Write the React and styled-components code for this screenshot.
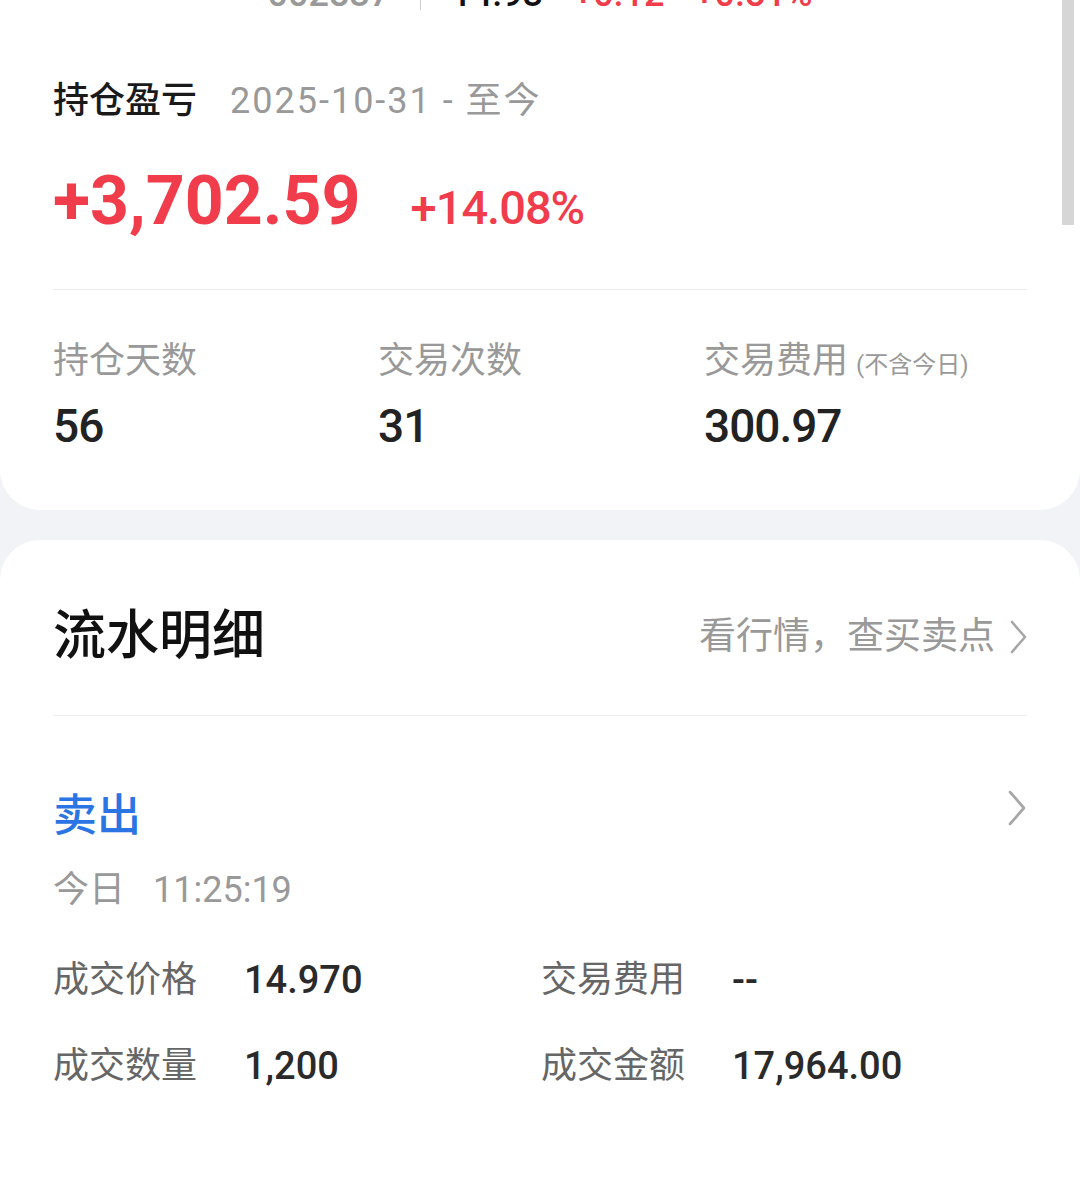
import styled, { createGlobalStyle } from "styled-components";

const GlobalStyle = createGlobalStyle`
  html, body {
    margin: 0;
    padding: 0;
    background: #f2f3f7;
  }
  body {
    font-family: Roboto, "Noto Sans CJK SC", sans-serif;
    -webkit-font-smoothing: antialiased;
  }
`;

const Page = styled.div`
  position: relative;
  width: 1080px;
  min-height: 1181px;
  overflow: hidden;
  background: #f2f3f7;
`;

const ScrollThumb = styled.div`
  position: absolute;
  top: 0;
  right: 6px;
  width: 12px;
  height: 225px;
  background: #d6d6d6;
`;

const SummaryCard = styled.section`
  background: #fff;
  border-radius: 0 0 40px 40px;
  padding: 0 53px 61px;
`;

const DetailCard = styled.section`
  margin-top: 30px;
  background: #fff;
  border-radius: 40px 40px 0 0;
  padding: 0 53px 80px;
  min-height: 600px;
`;

const TickerClip = styled.div`
  height: 10px;
  overflow: hidden;
`;

const TickerRow = styled.div`
  display: flex;
  justify-content: center;
  align-items: center;
  gap: 30px;
  margin-top: -24px;
  padding-left: 0;
  padding-right: 0;
  font-size: 36px;
  line-height: 1;
  font-weight: 500;
`;

const TickerText = styled.span`
  color: ${(p) => p.$color || "#111"};
`;

const TickerSep = styled.span`
  width: 1px;
  height: 36px;
  background: #ccc;
`;

const HeaderRow = styled.div`
  display: flex;
  align-items: center;
  margin-top: 73px;
  height: 36px;
  gap: 33px;
`;

const HeaderTitle = styled.span`
  font-size: 36px;
  line-height: 36px;
  font-weight: 500;
  color: #1a1a1a;
`;

const HeaderDate = styled.span`
  font-size: 36px;
  line-height: 36px;
  letter-spacing: 2px;
  color: #999;
`;

const AmountRow = styled.div`
  display: flex;
  align-items: baseline;
  gap: 50px;
  margin-top: 48px;
  height: 68px;
  color: #f03c4b;
`;

const BigAmount = styled.span`
  font-size: 68px;
  line-height: 68px;
  font-weight: 700;
  letter-spacing: 0;
`;

const Percent = styled.span`
  font-size: 47px;
  line-height: 47px;
  font-weight: 500;
  letter-spacing: -1px;
`;

const Divider = styled.div`
  height: 1px;
  background: #ededed;
  margin-top: ${(p) => p.$top || 0}px;
`;

const StatsGrid = styled.div`
  display: grid;
  grid-template-columns: 325px 326px 1fr;
  margin-top: 53px;
`;

const Stat = styled.div`
  display: flex;
  flex-direction: column;
`;

const StatLabel = styled.div`
  display: flex;
  align-items: baseline;
  gap: 8px;
  height: 36px;
  font-size: 36px;
  line-height: 36px;
  color: #999;
`;

const StatNote = styled.span`
  font-size: 24px;
  line-height: 24px;
  color: #999;
`;

const StatValue = styled.div`
  margin-top: 24px;
  font-size: 46px;
  line-height: 46px;
  font-weight: 500;
  letter-spacing: -1px;
  color: #222;
`;

const SectionHead = styled.div`
  display: flex;
  align-items: center;
  justify-content: space-between;
  padding-top: 70px;
  padding-bottom: 52px;
`;

const SectionTitle = styled.h2`
  margin: 0;
  font-size: 53px;
  line-height: 53px;
  font-weight: 500;
  color: #111;
`;

const MoreLink = styled.a`
  display: flex;
  align-items: center;
  gap: 15px;
  font-size: 37px;
  line-height: 37px;
  color: #999;
  text-decoration: none;
  cursor: pointer;
`;

const Trade = styled.div`
  padding-top: 78px;
`;

const TradeHead = styled.div`
  display: flex;
  align-items: flex-start;
  justify-content: space-between;
  height: 44px;
`;

const TradeType = styled.span`
  font-size: 44px;
  line-height: 44px;
  font-weight: 500;
  color: ${(p) => (p.$sell ? "#2b74e4" : "#f03c4b")};
`;

const TradeArrow = styled.span`
  display: flex;
  margin-top: -4px;
`;

const TradeTime = styled.div`
  display: flex;
  align-items: center;
  gap: 28px;
  margin-top: 34px;
  font-size: 36px;
  line-height: 36px;
  color: #999;
`;

const FieldGrid = styled.div`
  display: grid;
  grid-template-columns: 488px 1fr;
  row-gap: 50px;
  margin-top: 54px;
`;

const Field = styled.div`
  display: flex;
  align-items: center;
  gap: 47px;
  height: 36px;
`;

const FieldLabel = styled.span`
  font-size: 36px;
  line-height: 36px;
  color: #666;
`;

const FieldValue = styled.span`
  font-size: 38px;
  line-height: 38px;
  font-weight: 500;
  letter-spacing: 0;
  color: #2a2a2a;
`;

function Chevron({ w = 17, h = 34 }) {
  return (
    <svg width={w} height={h} viewBox="0 0 17 34" fill="none">
      <polyline points="2,2 15,17 2,32" stroke="#a6a6a6" strokeWidth="2.6" strokeLinecap="round" strokeLinejoin="round" />
    </svg>
  );
}

const stats = [
  { label: "持仓天数", value: "56" },
  { label: "交易次数", value: "31" },
  { label: "交易费用", note: "(不含今日)", value: "300.97" },
];

const fields = [
  { label: "成交价格", value: "14.970" },
  { label: "交易费用", value: "--" },
  { label: "成交数量", value: "1,200" },
  { label: "成交金额", value: "17,964.00" },
];

export default function App() {
  return (
    <Page>
      <GlobalStyle />
      <SummaryCard>
        <TickerClip>
          <TickerRow>
            <TickerText $color="#999">002837</TickerText>
            <TickerSep />
            <TickerText>14.93</TickerText>
            <TickerText $color="#f03c4b">+0.12</TickerText>
            <TickerText $color="#f03c4b">+0.81%</TickerText>
          </TickerRow>
        </TickerClip>

        <HeaderRow>
          <HeaderTitle>持仓盈亏</HeaderTitle>
          <HeaderDate>2025-10-31 - 至今</HeaderDate>
        </HeaderRow>

        <AmountRow>
          <BigAmount>+3,702.59</BigAmount>
          <Percent>+14.08%</Percent>
        </AmountRow>

        <Divider $top={54} />

        <StatsGrid>
          {stats.map((s) => (
            <Stat key={s.label}>
              <StatLabel>
                {s.label}
                {s.note && <StatNote>{s.note}</StatNote>}
              </StatLabel>
              <StatValue>{s.value}</StatValue>
            </Stat>
          ))}
        </StatsGrid>
      </SummaryCard>

      <DetailCard>
        <SectionHead>
          <SectionTitle>流水明细</SectionTitle>
          <MoreLink>
            看行情，查买卖点
            <Chevron />
          </MoreLink>
        </SectionHead>
        <Divider />

        <Trade>
          <TradeHead>
            <TradeType $sell>卖出</TradeType>
            <TradeArrow>
              <Chevron w={20} h={36} />
            </TradeArrow>
          </TradeHead>
          <TradeTime>
            <span>今日</span>
            <span>11:25:19</span>
          </TradeTime>
          <FieldGrid>
            {fields.map((f) => (
              <Field key={f.label}>
                <FieldLabel>{f.label}</FieldLabel>
                <FieldValue>{f.value}</FieldValue>
              </Field>
            ))}
          </FieldGrid>
        </Trade>
      </DetailCard>

      <ScrollThumb />
    </Page>
  );
}
